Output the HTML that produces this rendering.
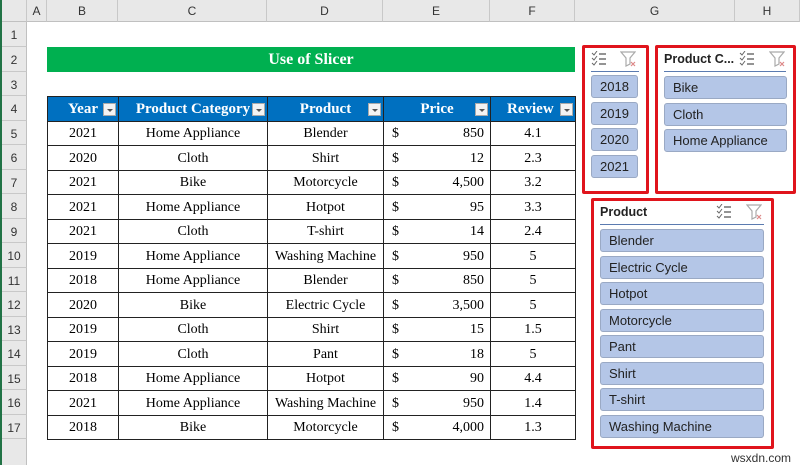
<!DOCTYPE html>
<html><head><meta charset="utf-8"><style>
*{box-sizing:border-box;margin:0;padding:0}
body{width:800px;height:465px;overflow:hidden;background:#fff;position:relative;font-family:"Liberation Sans",sans-serif}
.a{position:absolute}
.ch{position:absolute;top:0;height:22px;background:#e8e8e8;border-right:1px solid #c8c8c8;border-bottom:1px solid #c0c0c0;font-size:12px;color:#333;text-align:center;line-height:22px}
.rh{position:absolute;left:2px;width:25px;background:#e8e8e8;border-bottom:1px solid #c8c8c8;border-right:1px solid #c0c0c0;font-size:12px;color:#333;text-align:center}
table{position:absolute;left:47px;top:96px;border-collapse:collapse;font-family:"Liberation Serif",serif;font-size:14px;table-layout:fixed}
td{border:1px solid #222;height:24.5px;text-align:center;padding:2px 0 0 0;white-space:nowrap;vertical-align:middle}
th{background:#0070c0;color:#fff;font-weight:bold;font-size:15px;height:24.5px;border:1px solid #222;position:relative;text-align:center;white-space:nowrap;padding-top:1px}
th i{position:absolute;right:2px;top:6px;width:13px;height:13px;background:#f3f3f3;border:1px solid #aaa}
th i:after{content:"";position:absolute;left:3px;top:5px;border-left:3px solid transparent;border-right:3px solid transparent;border-top:3px solid #555}
td.p{text-align:right;padding-right:6px;position:relative}
td.p span{position:absolute;left:8px}
.sl{position:absolute;border:3px solid #e0141c;border-radius:2px;background:#fff}
.btn{position:absolute;background:#b4c6e7;border:1px solid #9aa9c4;border-radius:3px;font-size:13px;color:#222;line-height:22px;height:23px;padding-left:8px}
.hdr{position:absolute;font-size:12.5px;font-weight:bold;color:#222}
.line{position:absolute;height:1px;background:#5b7bb0}
</style></head><body>
<div class="a" style="left:0;top:0;width:2px;height:465px;background:#217346"></div>
<div class="ch" style="left:2px;width:25px"></div>
<div class="ch" style="left:27px;width:20px">A</div>
<div class="ch" style="left:47px;width:71px">B</div>
<div class="ch" style="left:118px;width:149px">C</div>
<div class="ch" style="left:267px;width:116px">D</div>
<div class="ch" style="left:383px;width:107px">E</div>
<div class="ch" style="left:490px;width:85px">F</div>
<div class="ch" style="left:575px;width:160px">G</div>
<div class="ch" style="left:735px;width:65px">H</div>

<div class="rh" style="top:22px;height:25px;line-height:26px">1</div>
<div class="rh" style="top:47px;height:24.5px;line-height:26px">2</div>
<div class="rh" style="top:71.5px;height:24.5px;line-height:26px">3</div>
<div class="rh" style="top:96px;height:24.5px;line-height:26px">4</div>
<div class="rh" style="top:120.5px;height:24.5px;line-height:26px">5</div>
<div class="rh" style="top:145px;height:24.5px;line-height:26px">6</div>
<div class="rh" style="top:169.5px;height:24.5px;line-height:26px">7</div>
<div class="rh" style="top:194px;height:24.5px;line-height:26px">8</div>
<div class="rh" style="top:218.5px;height:24.5px;line-height:26px">9</div>
<div class="rh" style="top:243px;height:24.5px;line-height:26px">10</div>
<div class="rh" style="top:267.5px;height:24.5px;line-height:26px">11</div>
<div class="rh" style="top:292px;height:24.5px;line-height:26px">12</div>
<div class="rh" style="top:316.5px;height:24.5px;line-height:26px">13</div>
<div class="rh" style="top:341px;height:24.5px;line-height:26px">14</div>
<div class="rh" style="top:365.5px;height:24.5px;line-height:26px">15</div>
<div class="rh" style="top:390px;height:24.5px;line-height:26px">16</div>
<div class="rh" style="top:414.5px;height:24.5px;line-height:26px">17</div>
<div class="rh" style="top:439px;height:26px;border-bottom:none"></div>

<div class="a" style="left:47px;top:47px;width:528px;height:25px;background:#00b050;color:#fff;font-family:'Liberation Serif',serif;font-weight:bold;font-size:16px;text-align:center;line-height:26px">Use of Slicer</div>

<table>
<colgroup><col style="width:71px"><col style="width:149px"><col style="width:116px"><col style="width:107px"><col style="width:85px"></colgroup>
<tr><th>Year<i></i></th><th>Product Category<i></i></th><th>Product<i></i></th><th>Price<i></i></th><th style="text-align:left;padding-left:16px">Review<i></i></th></tr>
<tr><td>2021</td><td>Home Appliance</td><td>Blender</td><td class="p"><span>$</span>850</td><td>4.1</td></tr>
<tr><td>2020</td><td>Cloth</td><td>Shirt</td><td class="p"><span>$</span>12</td><td>2.3</td></tr>
<tr><td>2021</td><td>Bike</td><td>Motorcycle</td><td class="p"><span>$</span>4,500</td><td>3.2</td></tr>
<tr><td>2021</td><td>Home Appliance</td><td>Hotpot</td><td class="p"><span>$</span>95</td><td>3.3</td></tr>
<tr><td>2021</td><td>Cloth</td><td>T-shirt</td><td class="p"><span>$</span>14</td><td>2.4</td></tr>
<tr><td>2019</td><td>Home Appliance</td><td>Washing Machine</td><td class="p"><span>$</span>950</td><td>5</td></tr>
<tr><td>2018</td><td>Home Appliance</td><td>Blender</td><td class="p"><span>$</span>850</td><td>5</td></tr>
<tr><td>2020</td><td>Bike</td><td>Electric Cycle</td><td class="p"><span>$</span>3,500</td><td>5</td></tr>
<tr><td>2019</td><td>Cloth</td><td>Shirt</td><td class="p"><span>$</span>15</td><td>1.5</td></tr>
<tr><td>2019</td><td>Cloth</td><td>Pant</td><td class="p"><span>$</span>18</td><td>5</td></tr>
<tr><td>2018</td><td>Home Appliance</td><td>Hotpot</td><td class="p"><span>$</span>90</td><td>4.4</td></tr>
<tr><td>2021</td><td>Home Appliance</td><td>Washing Machine</td><td class="p"><span>$</span>950</td><td>1.4</td></tr>
<tr><td>2018</td><td>Bike</td><td>Motorcycle</td><td class="p"><span>$</span>4,000</td><td>1.3</td></tr>
</table>

<svg width="0" height="0" style="position:absolute"><defs>
<g id="ms"><path d="M1 2l2 2 3-4M1 7l2 2 3-4M1 12l2 2 3-4" stroke="#666" fill="none" stroke-width="1"/><path d="M8 3h7M8 8h7M8 13h7" stroke="#555" stroke-width="1.2"/></g>
<g id="fl"><path d="M1 1h14l-5 6v6l-4 2V7z" stroke="#aaa" fill="none" stroke-width="1.2"/><path d="M11 11l4 4M15 11l-4 4" stroke="#d88" stroke-width="1.2"/></g>
</defs></svg>

<div class="sl" style="left:582px;top:45px;width:67px;height:149px"></div>
<svg class="a" style="left:591px;top:51px" width="16" height="16"><use href="#ms"/></svg>
<svg class="a" style="left:620px;top:51px" width="16" height="16"><use href="#fl"/></svg>
<div class="line" style="left:591px;top:71px;width:48px"></div>
<div class="btn" style="left:591px;top:75px;width:47px">2018</div>
<div class="btn" style="left:591px;top:101.5px;width:47px">2019</div>
<div class="btn" style="left:591px;top:128px;width:47px">2020</div>
<div class="btn" style="left:591px;top:154.5px;width:47px">2021</div>

<div class="sl" style="left:655px;top:45px;width:141px;height:149px"></div>
<div class="hdr" style="left:664px;top:52px">Product C...</div>
<svg class="a" style="left:739px;top:51px" width="16" height="16"><use href="#ms"/></svg>
<svg class="a" style="left:769px;top:51px" width="16" height="16"><use href="#fl"/></svg>
<div class="line" style="left:664px;top:71px;width:122px"></div>
<div class="btn" style="left:664px;top:76px;width:123px">Bike</div>
<div class="btn" style="left:664px;top:102.5px;width:123px">Cloth</div>
<div class="btn" style="left:664px;top:129px;width:123px">Home Appliance</div>

<div class="sl" style="left:591px;top:198px;width:183px;height:251px"></div>
<div class="hdr" style="left:600px;top:205px">Product</div>
<svg class="a" style="left:716px;top:204px" width="16" height="16"><use href="#ms"/></svg>
<svg class="a" style="left:746px;top:204px" width="16" height="16"><use href="#fl"/></svg>
<div class="line" style="left:600px;top:224px;width:164px"></div>
<div class="btn" style="left:600px;top:229px;width:164px">Blender</div>
<div class="btn" style="left:600px;top:255.5px;width:164px">Electric Cycle</div>
<div class="btn" style="left:600px;top:282px;width:164px">Hotpot</div>
<div class="btn" style="left:600px;top:308.5px;width:164px">Motorcycle</div>
<div class="btn" style="left:600px;top:335px;width:164px">Pant</div>
<div class="btn" style="left:600px;top:361.5px;width:164px">Shirt</div>
<div class="btn" style="left:600px;top:388px;width:164px">T-shirt</div>
<div class="btn" style="left:600px;top:414.5px;width:164px">Washing Machine</div>

<div class="a" style="left:731px;top:451px;font-size:12px;color:#333">wsxdn.com</div>
</body></html>
